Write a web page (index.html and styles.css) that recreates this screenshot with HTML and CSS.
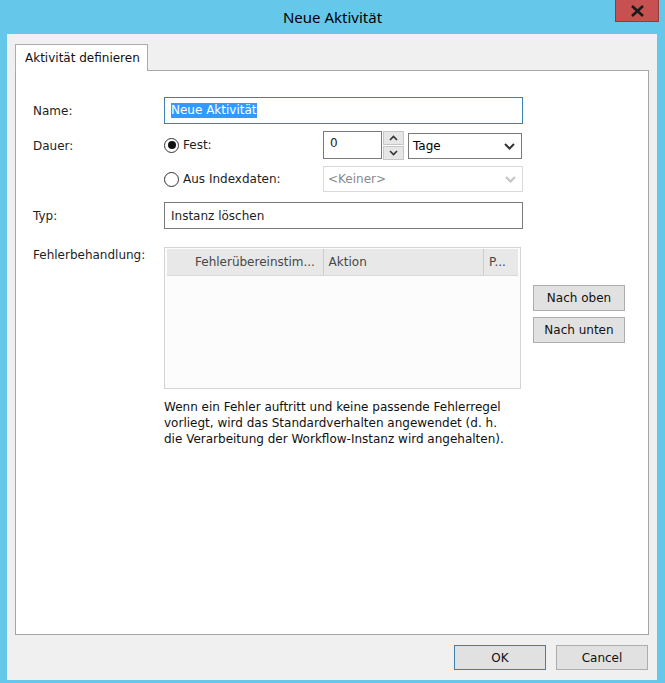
FILE: index.html
```html
<!DOCTYPE html>
<html lang="de">
<head>
    <meta charset="UTF-8">
    <meta name="viewport" content="width=device-width, initial-scale=1.0">
    <title>Neue Aktivität</title>
    <link rel="stylesheet" href="styles.css">
</head>
<body>
    <div class="fenster">
        <div class="titelleiste">
            <span class="titel">Neue Aktivität</span>
            <button class="schliessen" title="Schließen">
                <svg width="15" height="12" viewBox="0 0 15 12">
                    <path d="M2 1 L13 11 M13 1 L2 11" stroke="#1a1a1a" stroke-width="2.6" fill="none"/>
                </svg>
            </button>
        </div>

        <div class="inhalt">
            <div class="reiter">
                <div class="reiter-aktiv">Aktivität definieren</div>
            </div>

            <div class="reiter-seite">
                <div class="zeile zeile-name">
                    <span class="beschriftung">Name:</span>
                    <div class="textfeld fokus"><span class="markiert">Neue Aktivität</span></div>
                </div>

                <div class="zeile zeile-dauer">
                    <span class="beschriftung">Dauer:</span>
                    <div class="dauer-optionen">
                        <div class="dauer-zeile">
                            <label class="option"><span class="radio an"></span>Fest:</label>
                            <div class="zahlfeld">0</div>
                            <div class="drehknoepfe">
                                <span class="drehknopf">
                                    <svg width="9" height="6" viewBox="0 0 9 6"><path d="M1 5 L4.5 1.5 L8 5" stroke="#333" stroke-width="1.6" fill="none"/></svg>
                                </span>
                                <span class="drehknopf">
                                    <svg width="9" height="6" viewBox="0 0 9 6"><path d="M1 1 L4.5 4.5 L8 1" stroke="#333" stroke-width="1.6" fill="none"/></svg>
                                </span>
                            </div>
                            <div class="auswahl einheit">
                                <span>Tage</span>
                                <svg width="11" height="7" viewBox="0 0 11 7"><path d="M1 1 L5.5 5.5 L10 1" stroke="#333" stroke-width="2" fill="none"/></svg>
                            </div>
                        </div>
                        <div class="dauer-zeile">
                            <label class="option"><span class="radio"></span>Aus Indexdaten:</label>
                            <div class="auswahl gesperrt">
                                <span>&lt;Keiner&gt;</span>
                                <svg width="11" height="7" viewBox="0 0 11 7"><path d="M1 1 L5.5 5.5 L10 1" stroke="#c4c4c4" stroke-width="2" fill="none"/></svg>
                            </div>
                        </div>
                    </div>
                </div>

                <div class="zeile zeile-typ">
                    <span class="beschriftung">Typ:</span>
                    <div class="textfeld">Instanz löschen</div>
                </div>

                <div class="zeile zeile-fehler">
                    <span class="beschriftung">Fehlerbehandlung:</span>
                    <div class="fehler-bereich">
                        <div class="fehler-oben">
                            <div class="tabelle">
                                <div class="tabellenkopf">
                                    <span class="spalte spalte-regel">Fehlerübereinstim...</span>
                                    <span class="spalte spalte-aktion">Aktion</span>
                                    <span class="spalte spalte-p">P...</span>
                                </div>
                            </div>
                            <div class="knopf-spalte">
                                <button class="knopf">Nach oben</button>
                                <button class="knopf">Nach unten</button>
                            </div>
                        </div>
                        <p class="hinweis">Wenn ein Fehler auftritt und keine passende Fehlerregel<br>vorliegt, wird das Standardverhalten angewendet (d. h.<br>die Verarbeitung der Workflow-Instanz wird angehalten).</p>
                    </div>
                </div>
            </div>

            <div class="dialog-knoepfe">
                <button class="knopf standard">OK</button>
                <button class="knopf">Cancel</button>
            </div>
        </div>
    </div>
</body>
</html>
```

FILE: styles.css
```css
body {
    margin: 0;
    padding: 0;
    background-color: #65c8ea;
    font-family: 'DejaVu Sans', sans-serif;
    font-size: 12px;
    color: #1e1e1e;
}

.fenster {
    width: 665px;
    height: 683px;
}

/* Titelleiste */
.titelleiste {
    height: 34px;
    display: grid;
    grid-template-columns: 1fr auto 1fr;
}

.titel {
    grid-column: 2;
    align-self: center;
    font-family: 'Noto Sans', sans-serif;
    font-size: 15px;
    color: #000;
}

.schliessen {
    grid-column: 3;
    justify-self: end;
    align-self: start;
    width: 44px;
    height: 22px;
    margin-right: 6px;
    padding: 0;
    border: 1px solid #8e3b3b;
    border-top: none;
    background-color: #c75050;
    display: flex;
    align-items: center;
    justify-content: center;
}

/* Client-Bereich */
.inhalt {
    margin: 0 8px 0 7px;
    height: 646px;
    box-sizing: border-box;
    padding: 10px 8px 10px 8px;
    background-color: #f0f0f0;
    display: flex;
    flex-direction: column;
}

.reiter {
    display: flex;
    height: 26px;
}

.reiter-aktiv {
    position: relative;
    z-index: 1;
    width: 133px;
    height: 27px;
    box-sizing: border-box;
    padding: 6px 0 0 9px;
    background-color: #fff;
    border: 1px solid #acacac;
    border-bottom: none;
    color: #111;
}

.reiter-seite {
    flex: 1;
    background-color: #fff;
    border: 1px solid #a6a6a6;
    padding: 26px 0 0 17px;
}

/* Formularzeilen */
.zeile {
    display: flex;
    align-items: center;
}

.beschriftung {
    width: 131px;
    flex-shrink: 0;
}

.textfeld {
    width: 359px;
    height: 27px;
    box-sizing: border-box;
    border: 1px solid #7a7a7a;
    padding: 0 6px;
    display: flex;
    align-items: center;
    background-color: #fff;
}

.textfeld.fokus {
    border-color: #3c7fb1;
}

.markiert {
    background-color: #3399ff;
    color: #fff;
    line-height: 15px;
}

.zeile-dauer {
    margin-top: 7px;
    align-items: flex-start;
}

.zeile-dauer .beschriftung {
    margin-top: 8px;
}

.dauer-optionen {
    display: flex;
    flex-direction: column;
    gap: 6px;
}

.dauer-zeile {
    display: flex;
    align-items: center;
    height: 28px;
}

.option {
    width: 159px;
    display: flex;
    align-items: center;
    gap: 4px;
}

.radio {
    width: 15px;
    height: 15px;
    box-sizing: border-box;
    border: 1px solid #333;
    border-radius: 50%;
    background-color: #fff;
    display: flex;
    align-items: center;
    justify-content: center;
}

.radio.an::after {
    content: "";
    width: 8px;
    height: 8px;
    border-radius: 50%;
    background-color: #111;
}

.zahlfeld {
    width: 59px;
    height: 28px;
    box-sizing: border-box;
    border: 1px solid #7a7a7a;
    padding: 4px 0 0 6px;
    align-self: flex-start;
}

.drehknoepfe {
    display: flex;
    flex-direction: column;
    gap: 1px;
    margin-left: 1px;
    align-self: flex-start;
}

.drehknopf {
    width: 21px;
    height: 14px;
    box-sizing: border-box;
    border: 1px solid #c6c6c6;
    background-color: #e6e6e6;
    display: flex;
    align-items: center;
    justify-content: center;
}

.auswahl {
    height: 26px;
    box-sizing: border-box;
    border: 1px solid #7a7a7a;
    padding: 0 6px 0 4px;
    display: flex;
    align-items: center;
    justify-content: space-between;
    background-color: #fff;
}

.einheit {
    width: 114px;
    margin-left: 4px;
    margin-top: 2px;
    color: #000;
}

.gesperrt {
    width: 200px;
    border-color: #d9d9d9;
    color: #8a8a8a;
}

.zeile-typ {
    margin-top: 9px;
}

.zeile-fehler {
    margin-top: 18px;
    align-items: flex-start;
}

.zeile-fehler .beschriftung {
    margin-top: 1px;
}

/* Fehlertabelle */
.fehler-oben {
    display: flex;
    align-items: flex-start;
}

.tabelle {
    width: 357px;
    height: 142px;
    box-sizing: border-box;
    border: 1px solid #d4d4d4;
    padding: 1px 2px 0 2px;
    background-color: #fcfcfc;
}

.tabellenkopf {
    display: flex;
    height: 26px;
    background-color: #e8e8e8;
    border-bottom: 1px solid #d8d8d8;
    color: #474747;
}

.spalte {
    display: flex;
    align-items: center;
    box-sizing: border-box;
    border-right: 1px solid #cdcdcd;
}

.spalte-regel {
    width: 157px;
    padding-left: 28px;
}

.spalte-aktion {
    width: 161px;
    padding-left: 5px;
}

.spalte-p {
    width: 34px;
    padding-left: 5px;
    border-right: none;
}

.knopf-spalte {
    display: flex;
    flex-direction: column;
    gap: 6px;
    margin: 38px 0 0 12px;
}

.knopf {
    width: 92px;
    height: 26px;
    box-sizing: border-box;
    border: 1px solid #adadad;
    background-color: #e1e1e1;
    font-family: 'DejaVu Sans', sans-serif;
    font-size: 12px;
    color: #111;
    padding: 0;
}

.hinweis {
    margin: 10px 0 0 0;
    line-height: 16px;
    white-space: nowrap;
    color: #111;
}

/* OK / Cancel */
.dialog-knoepfe {
    display: flex;
    justify-content: flex-end;
    gap: 10px;
    margin-top: 10px;
    padding-right: 1px;
}

.dialog-knoepfe .knopf {
    height: 25px;
}

.knopf.standard {
    border-color: #3c7fb1;
}
```
